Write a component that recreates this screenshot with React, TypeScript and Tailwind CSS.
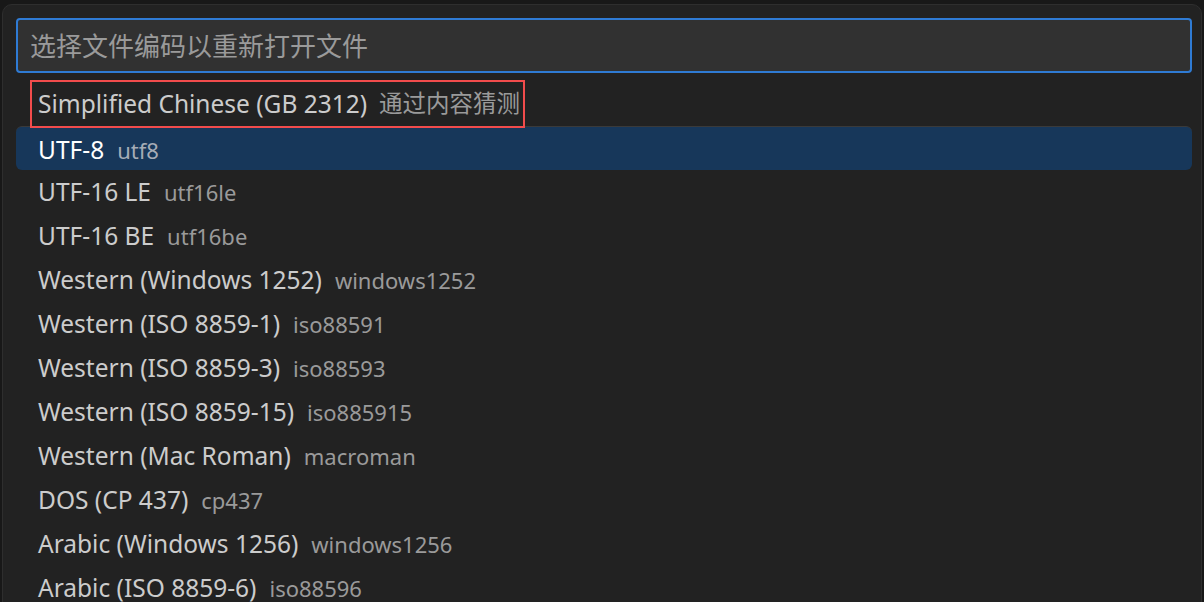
import React from "react";

const items: { label: string; desc: string }[] = [
  { label: "UTF-16 LE", desc: "utf16le" },
  { label: "UTF-16 BE", desc: "utf16be" },
  { label: "Western (Windows 1252)", desc: "windows1252" },
  { label: "Western (ISO 8859-1)", desc: "iso88591" },
  { label: "Western (ISO 8859-3)", desc: "iso88593" },
  { label: "Western (ISO 8859-15)", desc: "iso885915" },
  { label: "Western (Mac Roman)", desc: "macroman" },
  { label: "DOS (CP 437)", desc: "cp437" },
  { label: "Arabic (Windows 1256)", desc: "windows1256" },
  { label: "Arabic (ISO 8859-6)", desc: "iso88596" },
];

const font = {
  fontFamily: '"Noto Sans", "Noto Sans CJK SC", sans-serif',
};

export default function App() {
  return (
    <div
      className="w-[1204px] h-[602px] bg-[#181818] overflow-hidden pt-[4px] pl-[2px]"
      style={font}
    >
      <div className="w-[1200px] h-[620px] bg-[#222222] border border-[#2e2e2e] rounded-[10px] pt-[13px] pl-[13px] pr-[9px]">
        <div className="h-[55px] bg-[#313131] border-2 border-[#2f7bd4] rounded-[4px] flex items-center pl-[12px]">
          <span className="text-[26px] text-[#9a9a9a] leading-none">选择文件编码以重新打开文件</span>
        </div>
        <div className="mt-[9px] flex flex-col">
          <div className="h-[44px] flex items-center pl-[14px] relative z-10">
            <div className="h-[48px] flex items-center border-2 border-[#f24c4c] pl-[6px] w-[495px]">
              <span className="text-[24.5px] text-[#cccccc] whitespace-nowrap">Simplified Chinese (GB 2312)</span>
              <span className="ml-[12px] text-[23.5px] text-[#9a9a9a] whitespace-nowrap">通过内容猜测</span>
            </div>
          </div>
          <div className="h-[44px] flex items-center pl-[22px] pt-[3px] bg-[#17375a] border-t border-[#3a3a3a] rounded-[6px]">
            <span className="text-[24.5px] text-[#ffffff] whitespace-nowrap">UTF-8</span>
            <span className="ml-[13px] text-[22px] text-[#a5acb6] whitespace-nowrap">utf8</span>
          </div>
          {items.map((it) => (
            <div key={it.label} className="h-[44px] flex items-center pl-[22px]">
              <span className="text-[24.5px] text-[#cccccc] whitespace-nowrap">{it.label}</span>
              <span className="ml-[13px] text-[22px] text-[#9a9a9a] whitespace-nowrap">{it.desc}</span>
            </div>
          ))}
        </div>
      </div>
    </div>
  );
}
